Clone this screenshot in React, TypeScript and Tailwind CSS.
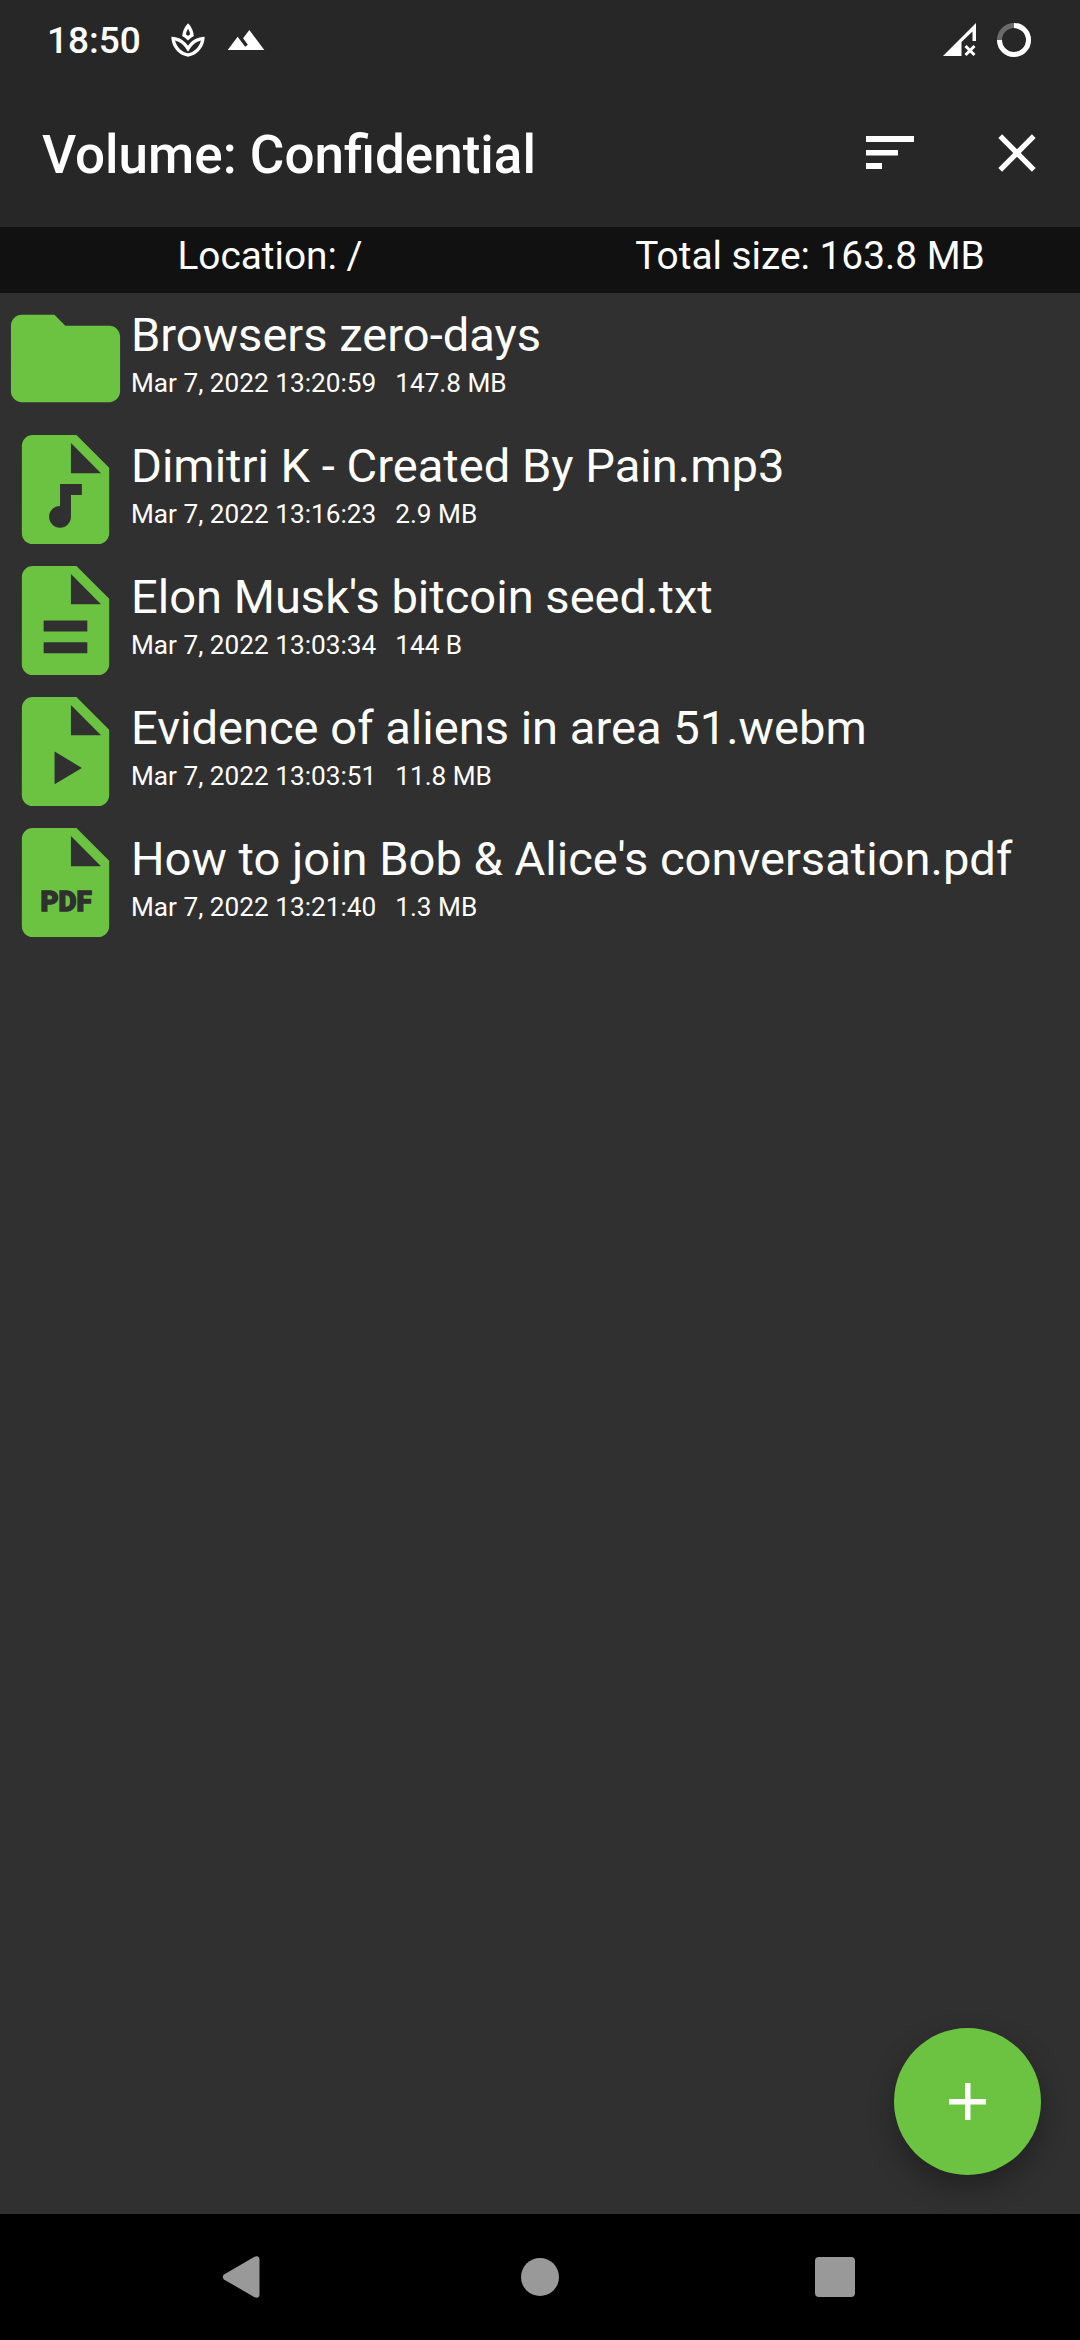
import React from "react";
import { MdOutlineSpa, MdTerrain } from "react-icons/md";

const FILE_BODY =
  "M14 2H6c-1.1 0-1.99.9-1.99 2L4 20c0 1.1.89 2 1.99 2H18c1.1 0 2-.9 2-2V8l-6-6z";
const FOLD = "M13 9V3.5L18.5 9H13z";

function FolderIcon() {
  return (
    <svg viewBox="0 0 24 24" className="size-[131px] shrink-0 fill-[#6cc342]">
      <path d="M9.97 4H4c-1.1 0-1.99.9-1.99 2L2 18c0 1.1.9 2 2 2h16c1.1 0 2-.9 2-2V8c0-1.1-.9-2-2-2h-8.03L9.97 4z" />
    </svg>
  );
}

function FileIcon({ kind }: { kind: string }) {
  return (
    <svg viewBox="0 0 24 24" className="size-[131px] shrink-0">
      <path d={FILE_BODY} className="fill-[#6cc342]" />
      <path d={FOLD} className="fill-[#303030]" />
      {kind === "audio" && (
        <path d="M11 11h4v2h-2v4a2 2 0 1 1-2-2z" className="fill-[#303030]" />
      )}
      {kind === "text" && <path d="M8 12h8v2H8zM8 16h8v2H8z" className="fill-[#303030]" />}
      {kind === "video" && <path d="M10 12v6l5-3z" className="fill-[#303030]" />}
      {kind === "pdf" && (
        <text
          x="7.4"
          y="17.3"
          textLength="9.4"
          lengthAdjust="spacing"
          className="fill-[#303030] stroke-[#303030] stroke-[0.25px] font-['Roboto'] text-[5.1px] font-black"
        >
          PDF
        </text>
      )}
    </svg>
  );
}

const ITEMS = [
  { kind: "folder", name: "Browsers zero-days", date: "Mar 7, 2022 13:20:59", size: "147.8 MB" },
  { kind: "audio", name: "Dimitri K - Created By Pain.mp3", date: "Mar 7, 2022 13:16:23", size: "2.9 MB" },
  { kind: "text", name: "Elon Musk's bitcoin seed.txt", date: "Mar 7, 2022 13:03:34", size: "144 B" },
  { kind: "video", name: "Evidence of aliens in area 51.webm", date: "Mar 7, 2022 13:03:51", size: "11.8 MB" },
  { kind: "pdf", name: "How to join Bob & Alice's conversation.pdf", date: "Mar 7, 2022 13:21:40", size: "1.3 MB" },
];

function StatusBar() {
  return (
    <div className="flex h-[80px] items-center pr-[49px] pl-[47px]">
      <span className="w-[121px] pt-[2px] text-[37px] leading-[80px] font-medium">18:50</span>
      <MdOutlineSpa className="size-[40px]" />
      <MdTerrain className="ml-[18px] size-[40px]" />
      <svg viewBox="0 0 34 34" className="ml-auto size-[34px] fill-white">
        <path d="M0 33 33 0V18H29.500V8.500L18.500 19V33z" />
        <path d="M22.500 23 31.500 32M31.500 23 22.500 32" className="stroke-white stroke-3" />
      </svg>
      <svg viewBox="0 0 34 34" className="ml-[20px] size-[34px] fill-none stroke-[5px]">
        <circle cx="17" cy="17" r="14.500" className="stroke-[#6b6b6b]" />
        <path d="M17 2.500A14.500 14.500 0 1 1 2.500 17" className="stroke-white" />
      </svg>
    </div>
  );
}

function AppBar() {
  return (
    <header className="flex h-[147px] items-center pr-[31px] pb-[2px] pl-[42px]">
      <h1 className="pt-[5px] text-[53px] leading-[64px] font-medium">Volume: Confidential</h1>
      <svg viewBox="0 0 48 34" className="ml-auto h-[34px] w-[48px] fill-white">
        <path d="M0 0h48v6H0zM0 14h32v5.500H0zM0 27h16v6H0z" />
      </svg>
      <svg viewBox="0 0 24 24" className="ml-[71px] size-[64px] fill-white">
        <path d="M19 6.410 17.590 5 12 10.590 6.410 5 5 6.410 10.590 12 5 17.590 6.410 19 12 13.410 17.590 19 19 17.590 13.410 12z" />
      </svg>
    </header>
  );
}

export default function App() {
  return (
    <div className="flex h-[2340px] w-[1080px] flex-col overflow-hidden bg-[#303030] font-['Roboto',sans-serif] text-white">
      <div className="h-[227px] bg-[#272727]">
        <StatusBar />
        <AppBar />
      </div>
      <div className="grid h-[66px] grid-cols-2 bg-[#111111] text-center text-[38.8px] leading-[58px]">
        <span>Location: /</span>
        <span>Total size: 163.8 MB</span>
      </div>
      <main className="relative flex-1">
        <ul>
          {ITEMS.map((f) => (
            <li key={f.name} className="flex h-[131px]">
              {f.kind === "folder" ? <FolderIcon /> : <FileIcon kind={f.kind} />}
              <div className="pt-[12px] whitespace-nowrap">
                <div className="text-[47.1px] leading-[60px]">{f.name}</div>
                <div className="flex gap-[19px] text-[26.2px] leading-[36px]">
                  <span>{f.date}</span>
                  <span>{f.size}</span>
                </div>
              </div>
            </li>
          ))}
        </ul>
        <button
          aria-label="Add"
          className="absolute right-[39px] bottom-[39px] flex size-[147px] items-center justify-center rounded-full bg-[#6cc342] shadow-[0_12px_28px_rgba(0,0,0,0.3)]"
        >
          <svg viewBox="0 0 37 37" className="size-[37px] fill-white">
            <path d="M16 0h5.500v16H37v5.500H21.500V37H16V21.500H0V16h16z" />
          </svg>
        </button>
      </main>
      <nav className="flex h-[126px] items-center justify-between bg-black pr-[225px] pl-[222px]">
        <svg viewBox="0 0 43 42" className="h-[42px] w-[43px] fill-[#999]">
          <path d="M2 18.600 32.500.700Q37.500-1 37.500 4V38Q37.500 43 32.500 41.300L2 23.400Q-.500 21 2 18.600z" />
        </svg>
        <div className="size-[38px] rounded-full bg-[#999]" />
        <div className="size-[40px] rounded-[4px] bg-[#999]" />
      </nav>
    </div>
  );
}
